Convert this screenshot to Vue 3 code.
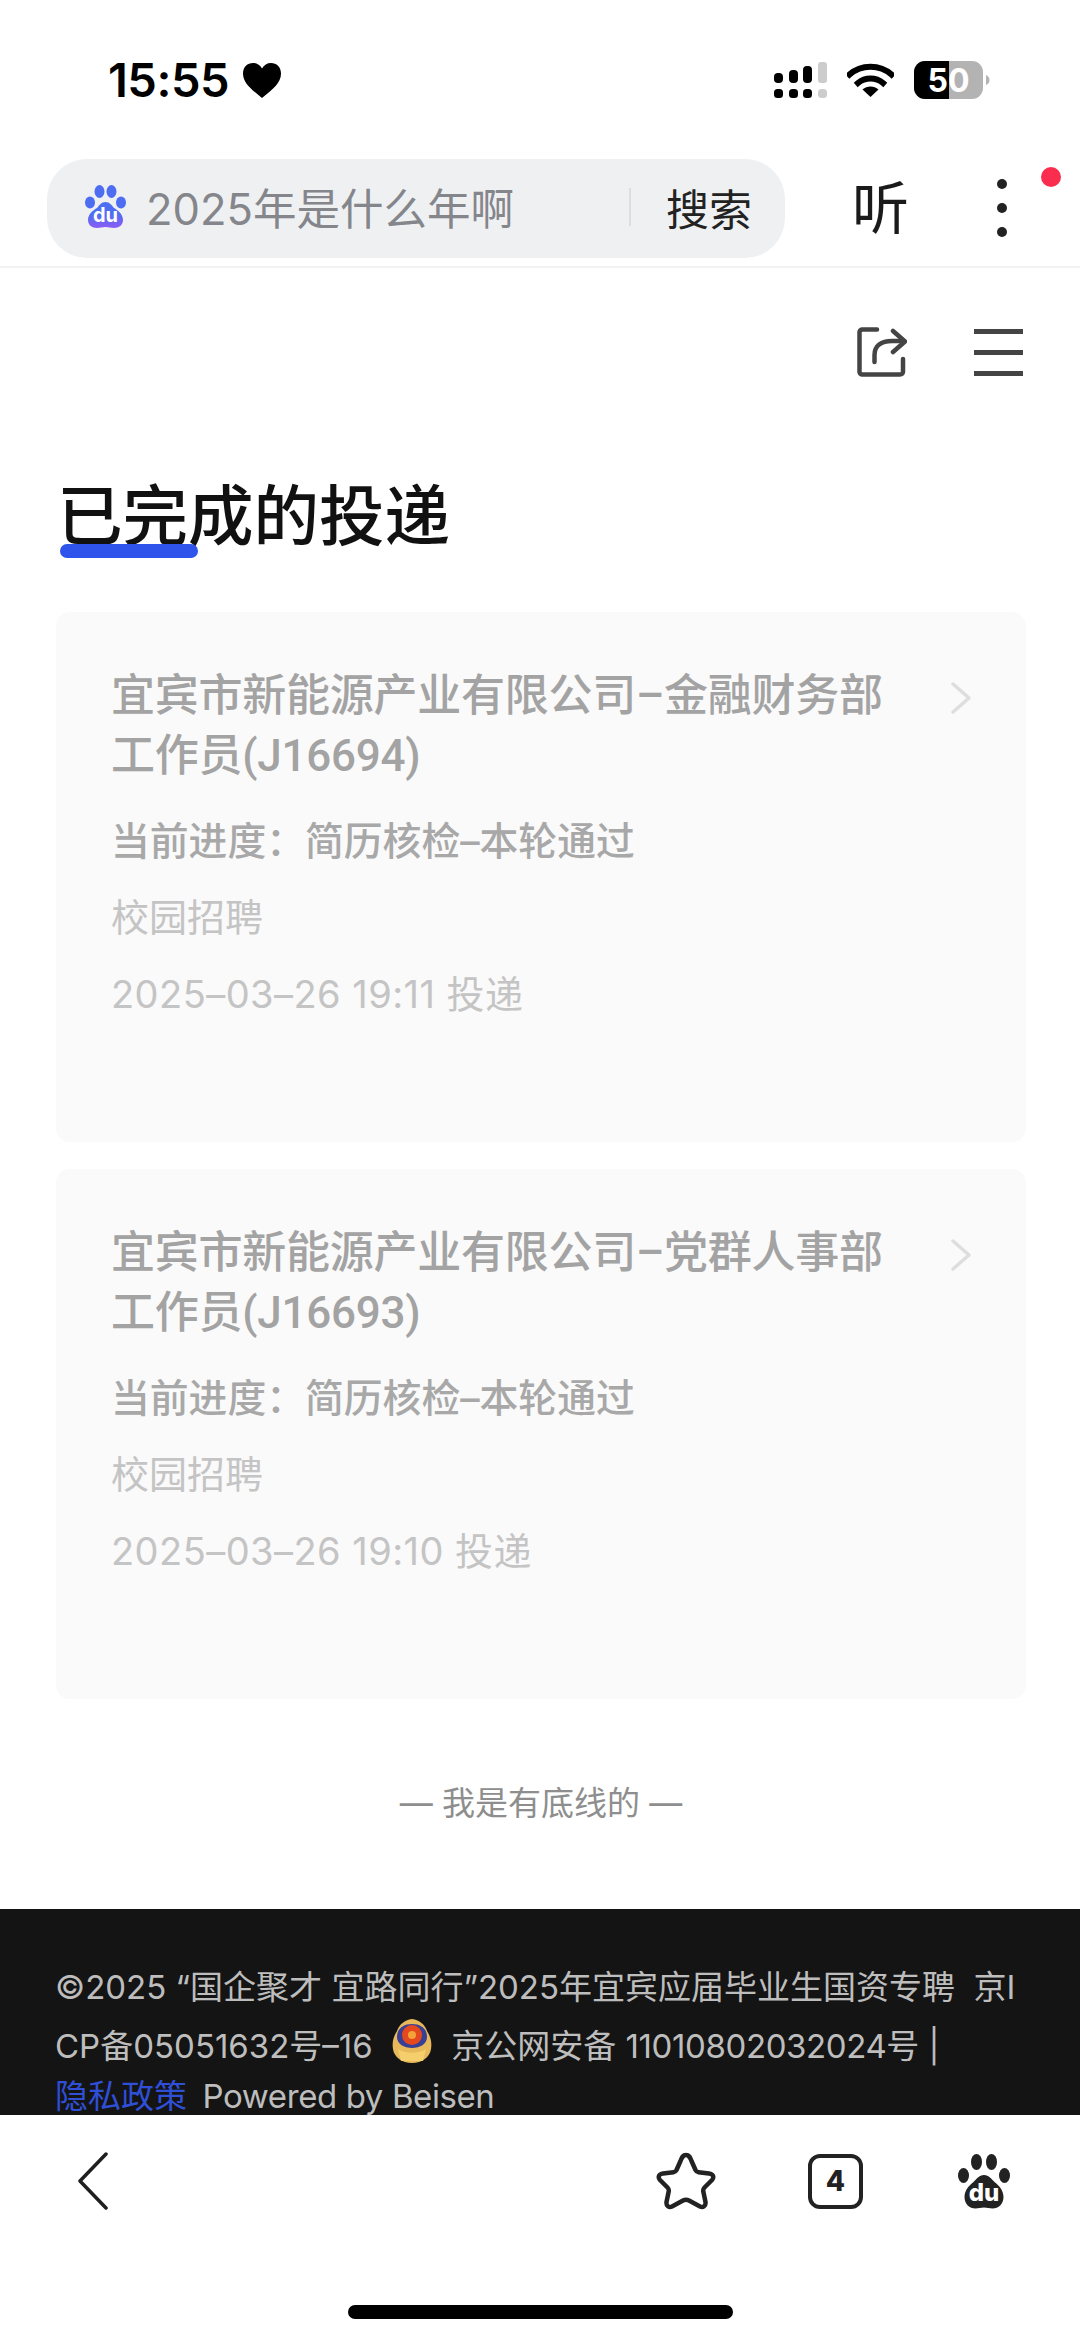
<script setup>
const cards = [
  { title: '宜宾市新能源产业有限公司–金融财务部工作员(J16694)', progress: '当前进度\uFF1A简历核检–本轮通过', type: '校园招聘', date: '2025–03–26 19:11 投递' },
  { title: '宜宾市新能源产业有限公司–党群人事部工作员(J16693)', progress: '当前进度\uFF1A简历核检–本轮通过', type: '校园招聘', date: '2025–03–26 19:10 投递' }
]
</script>

<template>
  <div class="screen">
    <div class="status">
      <div class="status-left">
        <span class="time">15:55</span>
        <svg class="heart" width="38" height="35" viewBox="0 0 38 35"><path d="M19 35C8 26 0 20 0 10.500C0 4 4.500 0 10 0c4 0 7 2 9 5.500C21 2 24 0 28 0c5.500 0 10 4 10 10.500C38 20 30 26 19 35z" fill="#000"/></svg>
      </div>
      <div class="status-right">
        <svg width="53" height="36" viewBox="0 0 53 36">
          <rect x="0" y="11" width="9" height="10" rx="4" fill="#000"/>
          <rect x="15" y="8" width="9" height="13" rx="4" fill="#000"/>
          <rect x="29" y="4" width="9" height="17" rx="4" fill="#000"/>
          <rect x="44" y="0" width="9" height="21" rx="3" fill="#ccc"/>
          <rect x="0" y="27" width="9" height="9" rx="3.500" fill="#000"/>
          <rect x="15" y="27" width="9" height="9" rx="3.500" fill="#000"/>
          <rect x="29" y="27" width="9" height="9" rx="3.500" fill="#000"/>
          <rect x="44" y="27" width="9" height="9" rx="3.500" fill="#ccc"/>
        </svg>
        <svg class="wifi" width="47" height="34" viewBox="0 0 47 34">
          <path d="M2.500 11.500C14 1 33 1 44.500 11.500" fill="none" stroke="#000" stroke-width="6" stroke-linecap="square"/>
          <path d="M11 20C18 14 29 14 36 20" fill="none" stroke="#000" stroke-width="6" stroke-linecap="square"/>
          <path d="M15.500 26.500C20 22.500 27 22.500 31.500 26.500L23.500 34z" fill="#000"/>
        </svg>
        <svg class="battery" width="76" height="38" viewBox="0 0 76 38">
          <rect width="69" height="38" rx="11" fill="#b3b3b3"/>
          <path d="M11 0H35V38H11A11 11 0 0 1 0 27V11A11 11 0 0 1 11 0z" fill="#000"/>
          <path d="M72 14c2.500 1 3.500 3 3.500 5s-1 4-3.500 5z" fill="#b3b3b3"/>
          <text x="34.500" y="31" text-anchor="middle" class="battery-text">50</text>
        </svg>
      </div>
    </div>

    <div class="search-row">
      <div class="pill">
        <svg class="paw" width="41" height="44" viewBox="0 0 41 44">
          <defs><linearGradient id="pawg" x1="0" y1="0" x2="0" y2="1"><stop offset="0.450" stop-color="#4e6ef2"/><stop offset="1" stop-color="#8b5cf6"/></linearGradient></defs>
          <ellipse cx="5" cy="17.500" rx="5" ry="6" fill="#4e6ef2"/>
          <ellipse cx="14.500" cy="6.500" rx="5" ry="6.500" fill="#4e6ef2"/>
          <ellipse cx="26.500" cy="6.500" rx="5" ry="6.500" fill="#4e6ef2"/>
          <ellipse cx="36" cy="17.500" rx="5" ry="6" fill="#4e6ef2"/>
          <path d="M20.500 17c4 0 6 3 8.500 6 3.500 2 9 6 9 12 0 5-4 8-9 8-3 0-5.500-1-8.500-1s-5.500 1-8.500 1c-5 0-9-3-9-8 0-6 5.500-10 9-12 2.500-3 4.500-6 8.500-6z" fill="url(#pawg)"/>
          <text x="20.500" y="37" text-anchor="middle" class="paw-text" fill="#fff">du</text>
        </svg>
        <span class="query">2025年是什么年啊</span>
        <span class="pill-divider"></span>
        <span class="search-btn">搜索</span>
      </div>
      <span class="listen">听</span>
      <div class="more">
        <i></i><i></i><i></i>
        <b class="red-dot"></b>
      </div>
    </div>

    <main class="main">
      <div class="tools">
        <svg width="50" height="50" viewBox="0 0 50 50" fill="none" stroke="#444" stroke-width="4.500" stroke-linecap="round" stroke-linejoin="round">
          <path d="M20 2.500H5A3 3 0 0 0 2.500 5V45A3 3 0 0 0 5 47.500H43A3 3 0 0 0 46 45V32"/>
          <path d="M17.500 35V28C17.500 19 24 14 35 14H47"/>
          <path d="M36 4L48 14.500L36 25"/>
        </svg>
        <div class="burger"><i></i><i></i><i></i></div>
      </div>
      <h1 class="heading">已完成的投递</h1>
      <div class="cards">
        <article v-for="c in cards" :key="c.date" class="card">
          <div class="card-top">
            <div class="card-title">{{ c.title }}</div>
            <svg class="chev" width="22" height="32" viewBox="0 0 22 32" fill="none" stroke="#dedede" stroke-width="3.500" stroke-linecap="round" stroke-linejoin="round"><path d="M3 2L19 16L3 30"/></svg>
          </div>
          <div class="progress">{{ c.progress }}</div>
          <div class="meta">{{ c.type }}</div>
          <div class="meta date">{{ c.date }}</div>
        </article>
      </div>
      <div class="end">— 我是有底线的 —</div>
    </main>

    <footer class="foot">
      <div class="foot-text">©2025 “国企聚才 宜路同行”2025年宜宾应届毕业生国资专聘&nbsp; 京ICP备05051632号–16 <svg class="emblem" width="40" height="44" viewBox="0 0 40 44">
          <path d="M20 0C28 1 33 6 35 12C39 18 40 24 39 30C38 38 30 44 20 44C10 44 2 38 1 30C0 24 1 18 5 12C7 6 12 1 20 0z" fill="#e8b95a"/>
          <path d="M5 18C5 9 12 5 20 5C28 5 35 9 35 18C35 25 28 29 20 29C12 29 5 25 5 18z" fill="#3a3f96"/>
          <circle cx="20" cy="16" r="10" fill="#e5481c"/>
          <circle cx="20" cy="16" r="4" fill="#f3a23a"/>
          <path d="M6 30C13 35 27 35 34 30L31 42H9z" fill="#f4cf6b"/>
        </svg> 京公网安备 <span class="tight">11010802032024</span>号 <span class="bar">|</span> <span class="privacy">隐私政策</span>&nbsp; <span class="tight">Powered by Beisen</span></div>
    </footer>

    <nav class="bottom">
      <div class="bottom-icons">
        <svg width="30" height="58" viewBox="0 0 30 58" fill="none" stroke="#1f1f1f" stroke-width="3.500" stroke-linecap="round" stroke-linejoin="round"><path d="M28 2L2 29L28 56"/></svg>
        <div class="bottom-right">
          <svg width="60" height="58" viewBox="0 0 60 58" fill="none" stroke="#222" stroke-width="4.500" stroke-linejoin="round"><path d="M30 3C33 3 34 5 35.500 9L39.500 18C40 19 41 20 42.500 20.200L53 21.500C57 22 58.500 25 56 28L48.500 35.500C47.500 36.500 47 38 47.300 39.500L49.500 50C50 54 47 56 44 54.500L33 48.500C31 47.500 29 47.500 27 48.500L16 54.500C13 56 10 54 10.500 50L12.700 39.500C13 38 12.500 36.500 11.500 35.500L4 28C1.500 25 3 22 7 21.500L17.500 20.200C19 20 20 19 20.500 18L24.500 9C26 5 27 3 30 3z"/></svg>
          <div class="tabs">4</div>
          <svg width="52" height="55" viewBox="0 0 52 55">
            <ellipse cx="5.500" cy="21.500" rx="5.500" ry="7.500" fill="#222"/>
            <ellipse cx="18.500" cy="8" rx="5.500" ry="8" fill="#222"/>
            <ellipse cx="33.500" cy="8" rx="5.500" ry="8" fill="#222"/>
            <ellipse cx="46.500" cy="21.500" rx="5.500" ry="7.500" fill="#222"/>
            <path d="M26 21c5 0 7.500 4 10.500 7 4 3 9 8 9 15 0 7-5 11.500-11 11.500-3 0-5.500-1-8.500-1s-5.500 1-8.500 1c-6 0-11-4.500-11-11.500 0-7 5-12 9-15 3-3 5.500-7 10.500-7z" fill="#222"/>
            <text x="26" y="47" text-anchor="middle" class="paw-text2" fill="#fff">du</text>
          </svg>
        </div>
      </div>
      <div class="home"></div>
    </nav>
  </div>
</template>

<style>
html, body { margin: 0; background: #fff; }
</style>

<style scoped>
.screen {
  width: 1080px;
  height: 2341px;
  display: flex;
  flex-direction: column;
  overflow: hidden;
  background: #fff;
  font-family: Inter, "Noto Sans CJK SC", sans-serif;
}
.status {
  height: 159px;
  box-sizing: border-box;
  padding: 61px 90px 0 108px;
  display: flex;
  justify-content: space-between;
  align-items: flex-start;
}
.status-left { display: flex; align-items: center; gap: 14px; height: 38px; }
.time { font-size: 47px; font-weight: 600; color: #000; line-height: 38px; letter-spacing: -0.5px; }
.status-right { display: flex; align-items: center; gap: 20px; height: 38px; }
.battery-text { font: 700 32px Inter, sans-serif; fill: #fff; }
.search-row {
  height: 109px;
  box-sizing: border-box;
  padding: 0 0 9px 47px;
  display: flex;
  align-items: center;
  border-bottom: 2px solid #f3f3f3;
  position: relative;
}
.pill {
  width: 738px;
  height: 99px;
  border-radius: 40px;
  background: #eff0f2;
  display: flex;
  align-items: center;
  padding-left: 38px;
  padding-bottom: 3px;
  box-sizing: border-box;
}
.paw-text { font: 700 20px Inter, sans-serif; }
.paw-text2 { font: 800 24px Inter, sans-serif; }
.query { font-size: 43.500px; color: #85868b; margin-left: 20px; width: 367px; white-space: nowrap; }
.pill-divider { width: 2px; height: 38px; background: #dcdde0; margin-left: 116px; }
.search-btn { font-size: 43px; color: #222; margin-left: 35px; white-space: nowrap; }
.listen { font-size: 57px; color: #1a1a1a; margin-left: 67px; line-height: 1; }
.more { display: flex; flex-direction: column; gap: 14px; margin-left: 88px; position: relative; }
.more i { width: 10px; height: 10px; border-radius: 50%; background: #222; display: block; }
.red-dot { position: absolute; width: 20px; height: 20px; border-radius: 50%; background: #fb2d4f; left: 44px; top: -12px; }
.main { flex: 1; display: flex; flex-direction: column; padding: 0 54px 0 56px; min-height: 0; }
.tools { display: flex; justify-content: flex-end; align-items: center; gap: 67px; margin-top: 58px; height: 52px; padding-right: 3px; }
.burger { display: flex; flex-direction: column; gap: 16px; width: 49px; }
.burger i { height: 5px; background: #444; display: block; }
.heading {
  margin: 94px 0 0 1px;
  font-size: 65.500px;
  font-weight: 500;
  line-height: 90px;
  color: #111;
  position: relative;
}
.heading::after {
  content: '';
  position: absolute;
  left: 3px;
  top: 72px;
  width: 138px;
  height: 14px;
  border-radius: 7px;
  background: #2f54eb;
}
.cards { display: flex; flex-direction: column; gap: 27px; margin-top: 50px; }
.card {
  height: 530px;
  box-sizing: border-box;
  background: #fafafa;
  border-radius: 14px;
  padding: 54px 54px 0 55px;
}
.card-top { display: flex; justify-content: space-between; }
.card-title { width: 790px; font-family: Roboto, "Noto Sans CJK SC", sans-serif; font-size: 44px; line-height: 60px; color: #a3a3a3; font-weight: 500; letter-spacing: -0.250px; }
.chev { margin-top: 16px; margin-right: 0; }
.progress { margin-top: 28px; font-size: 38.800px; line-height: 54px; color: #a8a8a8; font-weight: 500; }
.meta { margin-top: 22px; font-size: 38px; line-height: 54px; color: #c4c4c4; }
.date { margin-top: 23px; letter-spacing: 0.450px; }
.end { text-align: center; margin-top: 83px; font-size: 33px; line-height: 42px; color: #8e8e8e; }
.foot {
  height: 206px;
  box-sizing: border-box;
  background: #141414;
  padding: 53px 54px 0 55px;
  overflow: hidden;
}
.foot-text { font-size: 33px; line-height: 50px; color: #bdbdbd; word-break: break-all; }
.tight { letter-spacing: -0.400px; }
.emblem { vertical-align: -5px; margin: 7px 10px 0; }
.bar { color: #bbb; }
.privacy { color: #2f4fd6; display: inline-block; margin-right: -3px; }
.bottom { height: 226px; box-sizing: border-box; padding: 37px 70px 0 78px; display: flex; flex-direction: column; background: #fff; }
.bottom-icons { display: flex; justify-content: space-between; align-items: center; height: 58px; }
.bottom-right { display: flex; align-items: center; gap: 92px; }
.tabs {
  width: 55px; height: 55px; box-sizing: border-box;
  border: 4.500px solid #222; border-radius: 12px;
  margin-right: 3px;
  display: flex; align-items: center; justify-content: center;
  font-size: 28px; font-weight: 800; color: #222;
}
.home { width: 385px; height: 14px; border-radius: 7px; background: #000; align-self: center; margin-top: 95px; margin-right: 8px; }
</style>
